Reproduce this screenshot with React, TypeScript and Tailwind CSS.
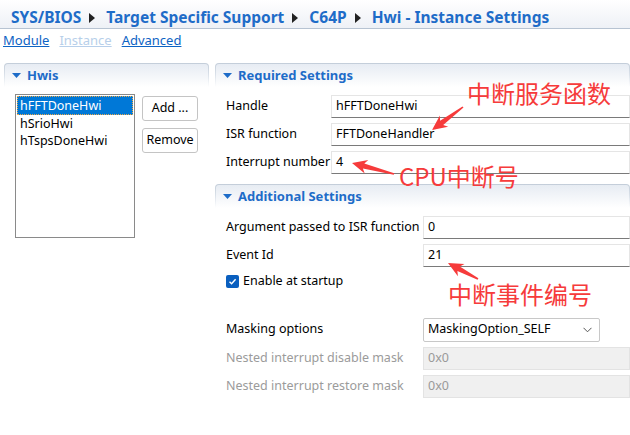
import React from "react";

const ui = { fontFamily: '"Noto Sans", "Liberation Sans", sans-serif' };
const cjk = { fontFamily: '"Noto Sans CJK SC", "Noto Sans", sans-serif' };

function arrowPoints(x1: number, y1: number, x2: number, y2: number) {
  const dx = x2 - x1;
  const dy = y2 - y1;
  const len = Math.hypot(dx, dy);
  const ux = dx / len;
  const uy = dy / len;
  const px = -uy;
  const py = ux;
  const headLen = 15;
  const headW = 7;
  const shaftTail = 0.8;
  const shaftHead = 2.6;
  const bx = x2 - ux * headLen;
  const by = y2 - uy * headLen;
  const inner = bx + ux * 3;
  const innerY = by + uy * 3;
  const pts = [
    [x1 + px * shaftTail, y1 + py * shaftTail],
    [inner + px * shaftHead, innerY + py * shaftHead],
    [bx + px * headW, by + py * headW],
    [x2, y2],
    [bx - px * headW, by - py * headW],
    [inner - px * shaftHead, innerY - py * shaftHead],
    [x1 - px * shaftTail, y1 - py * shaftTail],
  ];
  return pts.map((p) => `${p[0].toFixed(1)},${p[1].toFixed(1)}`).join(" ");
}

function Crumb({ children }: { children: React.ReactNode }) {
  return <span className="whitespace-nowrap text-[15.5px] font-bold leading-none text-[#1e6cc8]">{children}</span>;
}

function CrumbArrow() {
  return (
    <svg width="6" height="10" viewBox="0 0 6 10" className="ml-[8px] mr-[11px]">
      <polygon points="0,0 6,5 0,10" fill="#222" />
    </svg>
  );
}

function SectionHeader({ title }: { title: string }) {
  return (
    <div className="rounded-t-[4px] bg-gradient-to-b from-[#c3cdd9] via-[#dbe2ea] to-white px-px pt-px">
      <div className="flex h-[23px] items-center rounded-t-[3px] bg-gradient-to-b from-[#e7ecf3] to-white pl-[7px]">
        <svg width="9" height="5" viewBox="0 0 9 5" className="mr-[6px]">
          <polygon points="0,0 9,0 4.5,5" fill="#1e6cc8" />
        </svg>
        <span className="text-[13px] font-bold text-[#1e6cc8]">{title}</span>
      </div>
    </div>
  );
}

function TextBox({ value, disabled }: { value: string; disabled?: boolean }) {
  return (
    <div
      className={
        disabled
          ? "flex h-[23px] flex-1 items-center border border-[#e3e3e3] bg-[#f0f0f0] pl-[4px] text-[12.5px] text-[#9a9a9a]"
          : "flex h-[23px] flex-1 items-center border border-[#e5e5e5] border-b-[#7a7a7a] bg-white pl-[4px] text-[12.5px] text-black"
      }
    >
      {value}
    </div>
  );
}

export default function App() {
  return (
    <div className="relative h-[435px] w-[630px] overflow-hidden bg-white text-black" style={ui}>
      {/* breadcrumb */}
      <div className="flex h-[29px] items-center border-b border-[#b7c3d2] bg-gradient-to-b from-white to-[#eef1f6] pl-[11px] pt-[7px]">
        <Crumb>SYS/BIOS</Crumb>
        <CrumbArrow />
        <Crumb>Target Specific Support</Crumb>
        <CrumbArrow />
        <Crumb>C64P</Crumb>
        <CrumbArrow />
        <Crumb>Hwi - Instance Settings</Crumb>
      </div>

      {/* links */}
      <div className="flex h-[26px] items-start gap-[10px] pl-[3px] pt-[3px] text-[13px] leading-[16px]">
        <span className="text-[#0d63c4] underline">Module</span>
        <span className="text-[#b7cfea] underline">Instance</span>
        <span className="text-[#0d63c4] underline">Advanced</span>
      </div>

      <div className="mt-[8px] flex gap-[6px] pl-[4px]">
        {/* left */}
        <div className="flex w-[205px] flex-col">
          <SectionHeader title="Hwis" />
          <div className="flex gap-[7px] pl-[11px] pt-[7px]">
            <div className="h-[144px] w-[120px] border border-[#8a8a8a] bg-white p-px text-[12.5px] leading-[17px]">
              <div className="border border-dotted border-[#e9a84a] bg-[#0078d7] pl-[2px] text-white">hFFTDoneHwi</div>
              <div className="pl-[3px]">hSrioHwi</div>
              <div className="pl-[3px]">hTspsDoneHwi</div>
            </div>
            <div className="flex flex-col gap-[7px] pt-[2px]">
              <div className="flex h-[25px] w-[56px] items-center justify-center rounded-[3px] border border-[#c4c4c4] bg-white text-[12.5px]">Add ...</div>
              <div className="flex h-[25px] w-[56px] items-center justify-center rounded-[3px] border border-[#c4c4c4] bg-white text-[12.5px]">Remove</div>
            </div>
          </div>
        </div>

        {/* right */}
        <div className="flex flex-1 flex-col">
          <SectionHeader title="Required Settings" />
          <div className="flex flex-col gap-[5px] pl-[11px] pt-[8px] text-[12.5px]">
            <div className="flex items-center">
              <span className="w-[105px] whitespace-nowrap">Handle</span>
              <TextBox value="hFFTDoneHwi" />
            </div>
            <div className="flex items-center">
              <span className="w-[105px] whitespace-nowrap">ISR function</span>
              <TextBox value="FFTDoneHandler" />
            </div>
            <div className="flex items-center">
              <span className="w-[105px] whitespace-nowrap">Interrupt number</span>
              <TextBox value="4" />
            </div>
          </div>

          <div className="mt-[10px]">
            <SectionHeader title="Additional Settings" />
          </div>
          <div className="flex flex-col gap-[5px] pl-[11px] pt-[8px] text-[12.5px]">
            <div className="flex items-center">
              <span className="w-[197px] whitespace-nowrap">Argument passed to ISR function</span>
              <TextBox value="0" />
            </div>
            <div className="flex items-center">
              <span className="w-[197px]">Event Id</span>
              <TextBox value="21" />
            </div>
            <div className="flex items-center gap-[4px]">
              <span className="flex h-[13px] w-[13px] items-center justify-center rounded-[2px] bg-[#0a5fbf]">
                <svg width="9" height="9" viewBox="0 0 9 9">
                  <polyline points="1.5,4.8 3.6,6.8 7.6,2.2" fill="none" stroke="white" strokeWidth="1.4" />
                </svg>
              </span>
              <span>Enable at startup</span>
            </div>
            <div className="mt-[22px] flex items-center">
              <span className="w-[197px]">Masking options</span>
              <div className="flex h-[24px] w-[177px] items-center justify-between rounded-[2px] border border-[#c8c8c8] bg-white pl-[4px] pr-[7px]">
                <span>MaskingOption_SELF</span>
                <svg width="9" height="6" viewBox="0 0 9 6">
                  <polyline points="0.5,0.8 4.5,4.8 8.5,0.8" fill="none" stroke="#555" strokeWidth="1" />
                </svg>
              </div>
            </div>
            <div className="flex items-center text-[#9b9b9b]">
              <span className="w-[197px] whitespace-nowrap">Nested interrupt disable mask</span>
              <TextBox value="0x0" disabled />
            </div>
            <div className="flex items-center text-[#9b9b9b]">
              <span className="w-[197px] whitespace-nowrap">Nested interrupt restore mask</span>
              <TextBox value="0x0" disabled />
            </div>
          </div>
        </div>
      </div>

      {/* annotations */}
      <svg className="pointer-events-none absolute left-0 top-0" width="630" height="435">
        <polygon points={arrowPoints(463, 107, 432, 130)} fill="#f63b3b" />
        <polygon points={arrowPoints(394, 174, 352, 163)} fill="#f63b3b" />
        <polygon points={arrowPoints(478, 279, 448, 263)} fill="#f63b3b" />
      </svg>
      <div className="absolute left-[467px] top-[78px] text-[24px] leading-[30px] text-[#f63b3b]" style={cjk}>中断服务函数</div>
      <div className="absolute left-[399px] top-[161px] text-[24px] leading-[30px] text-[#f63b3b]" style={cjk}>CPU中断号</div>
      <div className="absolute left-[448px] top-[279px] text-[24px] leading-[30px] text-[#f63b3b]" style={cjk}>中断事件编号</div>
    </div>
  );
}
